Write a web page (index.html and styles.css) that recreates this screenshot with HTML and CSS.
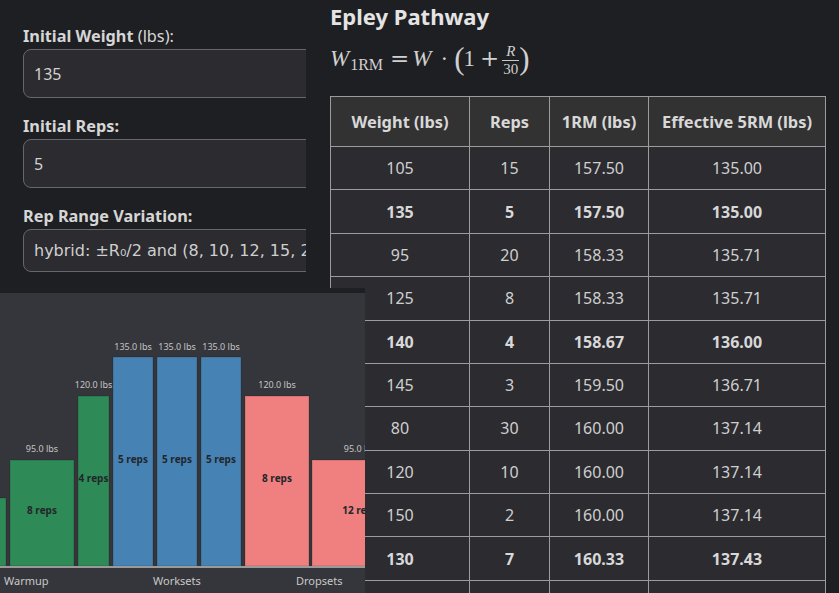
FILE: index.html
```html
<!DOCTYPE html>
<html lang="en">
<head>
<meta charset="utf-8">
<title>Epley Pathway</title>
<link rel="stylesheet" href="styles.css">
</head>
<body>
<div class="page">
  <section class="controls">
    <div class="field">
      <div class="label"><b>Initial Weight</b> (lbs):</div>
      <div class="input">135</div>
    </div>
    <div class="field">
      <div class="label"><b>Initial Reps:</b></div>
      <div class="input">5</div>
    </div>
    <div class="field">
      <div class="label"><b>Rep Range Variation:</b></div>
      <div class="input select">hybrid: ±R₀/2 and (8, 10, 12, 15, 20, 30)</div>
    </div>
  </section>
  <section class="results">
    <h2 class="title">Epley Pathway</h2>
    <div class="formula"><span class="mi w1">W</span><span class="sub">1RM</span><span class="op eq">=</span><span class="mi w2">W</span><span class="cdot">·</span><span class="paren lp">(</span><span class="mn">1</span><span class="op plus">+</span><span class="frac"><span class="fn">R</span><span class="fd">30</span></span><span class="paren rp">)</span></div>
    <table class="grid">
      <colgroup><col class="c1"><col class="c2"><col class="c3"><col class="c4"></colgroup>
      <thead>
        <tr><th>Weight (lbs)</th><th>Reps</th><th>1RM (lbs)</th><th>Effective 5RM (lbs)</th></tr>
      </thead>
      <tbody>
        <tr><td>105</td><td>15</td><td>157.50</td><td>135.00</td></tr>
        <tr class="hl"><td>135</td><td>5</td><td>157.50</td><td>135.00</td></tr>
        <tr><td>95</td><td>20</td><td>158.33</td><td>135.71</td></tr>
        <tr><td>125</td><td>8</td><td>158.33</td><td>135.71</td></tr>
        <tr class="hl"><td>140</td><td>4</td><td>158.67</td><td>136.00</td></tr>
        <tr><td>145</td><td>3</td><td>159.50</td><td>136.71</td></tr>
        <tr><td>80</td><td>30</td><td>160.00</td><td>137.14</td></tr>
        <tr><td>120</td><td>10</td><td>160.00</td><td>137.14</td></tr>
        <tr><td>150</td><td>2</td><td>160.00</td><td>137.14</td></tr>
        <tr class="hl"><td>130</td><td>7</td><td>160.33</td><td>137.43</td></tr>
        <tr class="tail"><td></td><td></td><td></td><td></td></tr>
      </tbody>
    </table>
  </section>
</div>

<div class="chart-panel">
  <svg class="chart" width="365" height="300" viewBox="0 0 365 300">
    <g class="bars">
      <rect class="warm" x="-90" y="205" width="96" height="68"/>
      <rect class="warm" x="10" y="167" width="64" height="106"/>
      <rect class="warm" x="78" y="103" width="31" height="170"/>
      <rect class="work" x="113" y="64" width="40" height="209"/>
      <rect class="work" x="157" y="64" width="40" height="209"/>
      <rect class="work" x="201" y="64" width="40" height="209"/>
      <rect class="drop" x="245" y="103" width="64" height="170"/>
      <rect class="drop" x="312" y="167" width="96" height="106"/>
    </g>
    <rect class="axis" x="0" y="273" width="365" height="2"/>
    <g class="wt">
      <text x="42" y="159">95.0 lbs</text>
      <text x="93.5" y="95">120.0 lbs</text>
      <text x="133" y="57">135.0 lbs</text>
      <text x="177" y="57">135.0 lbs</text>
      <text x="221" y="57">135.0 lbs</text>
      <text x="277" y="95">120.0 lbs</text>
      <text x="360" y="159">95.0 lbs</text>
    </g>
    <g class="reps">
      <text x="42" y="221">8 reps</text>
      <text x="93.5" y="189">4 reps</text>
      <text x="133" y="170">5 reps</text>
      <text x="177" y="170">5 reps</text>
      <text x="221" y="170">5 reps</text>
      <text x="277" y="189">8 reps</text>
      <text x="360" y="221">12 reps</text>
    </g>
    <g class="groups">
      <text x="4" y="292">Warmup</text>
      <text x="153" y="292">Worksets</text>
      <text x="296" y="292">Dropsets</text>
    </g>
  </svg>
</div>
</body>
</html>
```

FILE: styles.css
```css
html, body {
  margin: 0;
  padding: 0;
  overflow: hidden;
  background: #1e1f22;
}

body {
  font-family: "Noto Sans", "Open Sans", sans-serif;
  color: #d4d4d4;
  width: 839px;
  height: 593px;
  position: relative;
}

.page {
  display: flex;
  align-items: flex-start;
}

/* ---------- left controls ---------- */
.controls {
  flex: 0 0 306px;
  box-sizing: border-box;
  padding: 24px 0 0 23px;
  overflow: hidden;
}

.field + .field {
  margin-top: 16px;
}

.label {
  font-size: 16.3px;
  line-height: 24px;
  color: #d6d6d6;
  white-space: nowrap;
}

.label b {
  font-weight: 700;
}

.input {
  margin-top: 1px;
  width: 320px;
  height: 49px;
  box-sizing: border-box;
  border: 1px solid #66676b;
  border-radius: 8px;
  background: #2b2b30;
  padding: 0 10px;
  display: flex;
  align-items: center;
  font-size: 16px;
  color: #d2d2d2;
  white-space: nowrap;
  overflow: hidden;
}

.input.select {
  height: 43px;
  font-family: "DejaVu Sans", "Noto Sans", sans-serif;
  color: #cfcfcf;
}

/* ---------- right results ---------- */
.results {
  flex: 0 0 495px;
  margin-left: 24px;
}

.title {
  margin: 0;
  padding-top: 1px;
  font-size: 22px;
  line-height: 30px;
  font-weight: 700;
  color: #e4e4e4;
}

.formula {
  height: 52px;
  margin-top: 2px;
  margin-bottom: 11px;
  font-family: "Liberation Serif", "DejaVu Serif", serif;
  font-size: 23px;
  line-height: 52px;
  color: #d0d0d0;
  white-space: nowrap;
}

.formula > span {
  display: inline-block;
  line-height: 20px;
}

.formula .mi {
  font-style: italic;
}

.formula .sub {
  font-size: 16px;
  vertical-align: -4px;
  margin-left: 1px;
}

.formula .op {
  font-family: "DejaVu Serif", "Liberation Serif", serif;
}

.formula .eq {
  margin-left: 7px;
}

.formula .w2 {
  margin-left: 3px;
}

.formula .cdot {
  margin-left: 9px;
}

.formula .paren {
  font-size: 31px;
  vertical-align: -3px;
}

.formula .lp {
  margin-left: 6px;
}

.formula .mn {
  margin-left: -1px;
}

.formula .plus {
  margin-left: 5px;
}

.formula .frac {
  display: inline-flex;
  flex-direction: column;
  align-items: center;
  vertical-align: 10px;
  margin-left: 3px;
  font-size: 15px;
  line-height: 13px;
}

.frac .fn {
  font-style: italic;
  align-self: stretch;
  text-align: center;
  padding: 0 1px 2px;
  border-bottom: 1px solid #c8c8c8;
}

.frac .fd {
  padding: 2px 1px 0;
}

.grid {
  border-collapse: collapse;
  table-layout: fixed;
  width: 495px;
  font-size: 16px;
}

.grid col.c1 { width: 139px; }
.grid col.c2 { width: 80px; }
.grid col.c3 { width: 99px; }
.grid col.c4 { width: 177px; }

.grid th,
.grid td {
  border: 1px solid #9c9c9c;
  text-align: center;
  white-space: nowrap;
  line-height: 24px;
}

.grid th {
  background: #323232;
  color: #d8d8d8;
  font-weight: 700;
  font-size: 16.4px;
  padding: 12.5px 4px;
}

.grid td {
  background: #2b2b30;
  color: #cfcfcf;
  padding: 9.2px 4px;
}

.grid tr.hl td {
  font-weight: 700;
  color: #d8d8d8;
}

/* ---------- chart overlay ---------- */
.chart-panel {
  position: absolute;
  left: 0;
  top: 288px;
  width: 365px;
  height: 305px;
  box-sizing: border-box;
  border-top: 5px solid #1e1f22;
  background: #35363b;
  overflow: hidden;
}

.chart {
  display: block;
  font-family: "Noto Sans", "Open Sans", sans-serif;
}

.chart .warm { fill: #2e8b57; }
.chart .work { fill: #4682b4; }
.chart .drop { fill: #f08080; }

.chart .bars rect {
  stroke: rgba(0, 0, 0, 0.18);
  stroke-width: 1;
}

.chart .axis { fill: #9a9a9a; }

.chart .wt text {
  font-size: 9px;
  fill: #c4c4c4;
  text-anchor: middle;
}

.chart .reps text {
  font-size: 10px;
  font-weight: 700;
  fill: #22262a;
  text-anchor: middle;
}

.chart .groups text {
  font-size: 11px;
  fill: #c8c8c8;
}
```
